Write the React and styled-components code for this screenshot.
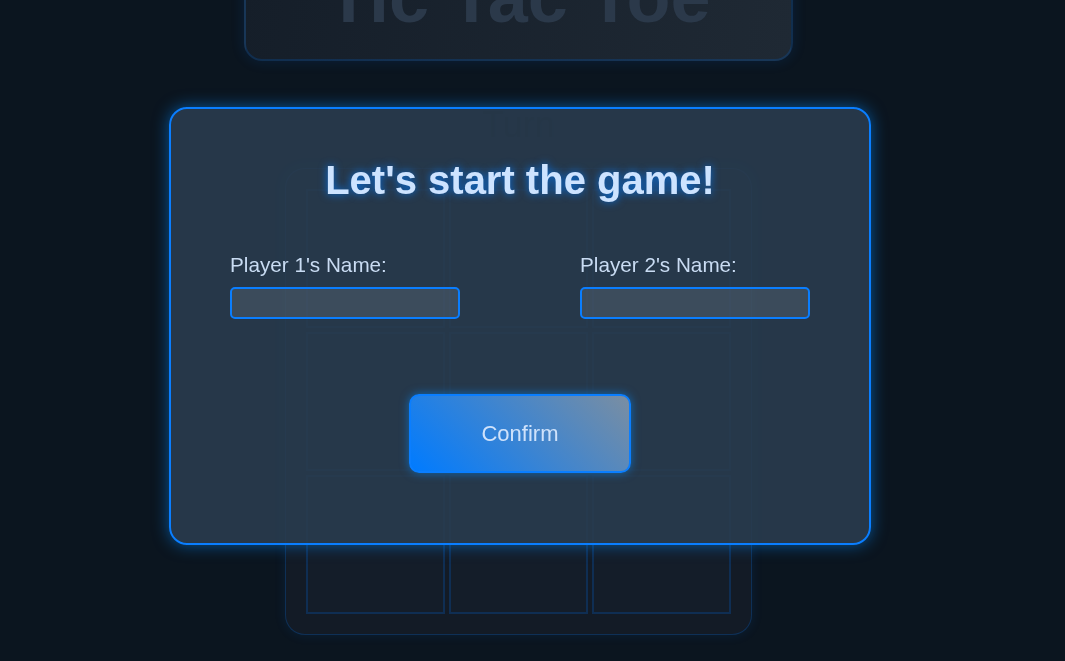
import React, { useState } from 'react';
import styled, { createGlobalStyle } from 'styled-components';

const GlobalStyle = createGlobalStyle`
  html, body {
    margin: 0;
    padding: 0;
    background: #0b151f;
    font-family: "Liberation Sans", Arial, sans-serif;
    overflow: hidden;
  }
`;

const Page = styled.div`
  width: 1065px;
  height: 661px;
  box-sizing: border-box;
  padding-right: 28px;
  display: flex;
  flex-direction: column;
  align-items: center;
  background: #0b151f;
  overflow: hidden;
`;

const TitleCard = styled.div`
  margin-top: -59px;
  width: 549px;
  box-sizing: border-box;
  padding: 11px 0 19px;
  border: 2px solid rgba(0, 110, 230, 0.2);
  border-radius: 18px;
  background: linear-gradient(100deg, #151e29, #1f2934);
  box-shadow: 0 0 14px rgba(0, 110, 230, 0.15);
  text-align: center;
`;

const GameTitle = styled.h1`
  margin: 0;
  font-size: 72px;
  line-height: 86px;
  font-weight: 700;
  color: #2b394a;
`;

const Turn = styled.div`
  margin-top: 43px;
  font-size: 36px;
  line-height: 41px;
  color: #000;
`;

const Board = styled.div`
  margin-top: 23px;
  padding: 20px;
  border: 1px solid rgba(0, 110, 230, 0.25);
  border-radius: 20px;
  background: #131b26;
  box-shadow: 0 0 12px rgba(0, 110, 230, 0.12);
  display: grid;
  grid-template-columns: repeat(3, 139px);
  grid-auto-rows: 139px;
  gap: 4px;
`;

const Cell = styled.div`
  box-sizing: border-box;
  border: 2px solid rgba(0, 110, 230, 0.22);
  background: #141d29;
`;

const Overlay = styled.div`
  position: fixed;
  inset: 0;
  box-sizing: border-box;
  padding: 0 25px 9px 0;
  display: flex;
  align-items: center;
  justify-content: center;
`;

const Modal = styled.div`
  width: 702px;
  height: 438px;
  box-sizing: border-box;
  padding: 47px 59px 70px;
  border: 2px solid #0a7eff;
  border-radius: 18px;
  background: rgba(41, 59, 78, 0.91);
  box-shadow: 0 0 16px rgba(0, 140, 255, 0.55);
  display: flex;
  flex-direction: column;
  align-items: center;
`;

const ModalTitle = styled.h2`
  margin: 0;
  font-size: 40px;
  line-height: 48px;
  font-weight: 700;
  color: #cde3ff;
  text-shadow: 0 0 8px rgba(0, 123, 255, 0.85);
`;

const Fields = styled.div`
  margin-top: 49px;
  width: 100%;
  display: flex;
  justify-content: space-between;
`;

const Field = styled.div`
  width: 230px;
  display: flex;
  flex-direction: column;
`;

const Label = styled.label`
  font-size: 20.7px;
  line-height: 24px;
  color: #c9dcf3;
  margin-bottom: 10px;
`;

const Input = styled.input`
  height: 32px;
  box-sizing: border-box;
  border: 2px solid #0a7eff;
  border-radius: 5px;
  background: rgba(255, 255, 255, 0.1);
  color: #dbe8f8;
  font-family: inherit;
  font-size: 16px;
  padding: 0 8px;
  outline: none;
`;

const ConfirmButton = styled.button`
  margin-top: 75px;
  width: 222px;
  height: 79px;
  box-sizing: border-box;
  border: 2px solid #0a7eff;
  border-radius: 10px;
  background: linear-gradient(45deg, #007bff, #7a8ea2);
  box-shadow: 0 0 10px rgba(0, 140, 255, 0.6);
  color: #cfe2fb;
  font-family: inherit;
  font-size: 22px;
  cursor: pointer;
`;

export default function App() {
  const [p1, setP1] = useState('');
  const [p2, setP2] = useState('');

  return (
    <>
      <GlobalStyle />
      <Page>
        <TitleCard>
          <GameTitle>Tic Tac Toe</GameTitle>
        </TitleCard>
        <Turn>Turn</Turn>
        <Board>
          {Array.from({ length: 9 }).map((_, i) => (
            <Cell key={i} />
          ))}
        </Board>
      </Page>
      <Overlay>
        <Modal>
          <ModalTitle>Let's start the game!</ModalTitle>
          <Fields>
            <Field>
              <Label>Player 1's Name:</Label>
              <Input value={p1} onChange={(e) => setP1(e.target.value)} />
            </Field>
            <Field>
              <Label>Player 2's Name:</Label>
              <Input value={p2} onChange={(e) => setP2(e.target.value)} />
            </Field>
          </Fields>
          <ConfirmButton>Confirm</ConfirmButton>
        </Modal>
      </Overlay>
    </>
  );
}
